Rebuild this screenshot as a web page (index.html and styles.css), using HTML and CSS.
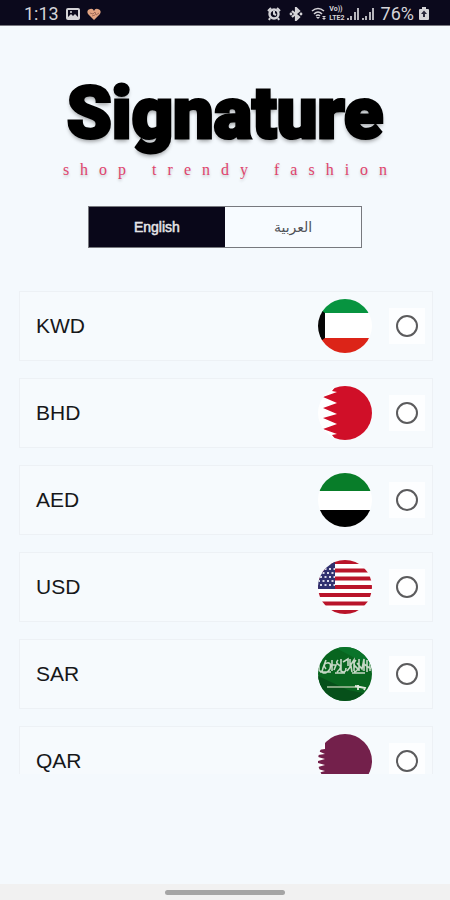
FILE: index.html
```html
<!DOCTYPE html>
<html lang="en">
<head>
<meta charset="utf-8">
<meta name="viewport" content="width=device-width, initial-scale=1">
<title>Signature</title>
<link rel="stylesheet" href="styles.css">
</head>
<body>
<div class="screen">
  <header class="status">
    <div class="status-group">
      <span>1:13</span>
      <svg class="picture" width="14" height="12" viewBox="0 0 14 12"><rect width="14" height="12" rx="2" fill="#d5d4d8"/><path d="M2 2h10v7l-3-3-2 2-2-2-3 3z" fill="#0b091c"/><circle cx="5" cy="4" r="1" fill="#d5d4d8"/></svg>
      <svg width="14" height="12" viewBox="0 0 14 12"><path d="M7 12L1 6Q-1 2 3 1Q6 0 7 3Q8 0 11 1Q15 2 13 6z" fill="#e2a482"/><path d="M3 5l3 1 2-2 1 3 3-2M5 8l3-1" stroke="#a06a58" fill="none"/></svg>
    </div>
    <div class="status-group right">
      <svg width="14" height="14" viewBox="0 0 14 14"><circle cx="7" cy="7" r="4.5" fill="none" stroke="#d5d4d8" stroke-width="2.400"/><path d="M1 4l3-3M10 1l3 3M3 11l-1 2M11 11l1 2M7 4v3l2 1" stroke="#d5d4d8" stroke-width="2" fill="none"/></svg>
      <svg class="bluetooth" width="14" height="14" viewBox="0 0 14 14"><path d="M3 4l7 6-3 3V1l3 3-7 6" stroke="#d5d4d8" stroke-width="2.200" fill="none"/><circle cx="2" cy="7" r="1.4" fill="#d5d4d8"/><circle cx="12" cy="7" r="1.4" fill="#d5d4d8"/></svg>
      <svg width="16" height="14" viewBox="0 0 16 14"><path d="M1 4Q7-1 13 4M3 7Q7 3 11 7M5 9Q7 7 9 9" stroke="#d5d4d8" stroke-width="1.6" fill="none"/><path d="M7 12l-2-2h4zM11 9l2 2 2-2M11 11l2 2 2-2" fill="#d5d4d8"/></svg>
      <span class="volte"><span>Vo))</span><span>LTE2</span></span>
      <svg width="13" height="14" viewBox="0 0 13 14"><path d="M1 13v-2M4 13V9M8 13V5M11 13V1" stroke="#d5d4d8" stroke-width="1.7"/></svg>
      <svg width="13" height="14" viewBox="0 0 13 14"><path d="M1 13v-2M4 13V9M8 13V5M11 13V1" stroke="#d5d4d8" stroke-width="1.7"/></svg>
      <span class="percent">76%</span>
      <svg width="10" height="13" viewBox="0 0 10 13"><path d="M3 0h4v2h2q1 0 1 1v9q0 1-1 1H1q-1 0-1-1V3q0-1 1-1h2z" fill="#d5d4d8"/><path d="M5 3.500L2 7h2v3h2V7h2z" fill="#28263a"/></svg>
    </div>
  </header>

  <main class="content">
    <h1 class="brand">Signature</h1>
    <p class="tagline">shop trendy fashion</p>
    <div class="languages">
      <button class="language selected" type="button">English</button>
      <button class="language" type="button" lang="ar">العربية</button>
    </div>

    <form class="currencies">
      <label class="currency"><span class="code">KWD</span>
        <svg class="flag" viewBox="0 0 54 54"><g clip-path="url(#disc)"><path d="M0 0h54v54H0z" fill="#fff"/><path d="M0 0h54v14H0z" fill="#079440"/><path d="M0 39h54v15H0z" fill="#dc2418"/><path d="M0 9l7 5v25l-7 5z" fill="#060606"/></g></svg>
        <span class="choice"><input type="radio" name="currency" value="KWD"></span></label>
      <label class="currency"><span class="code">BHD</span>
        <svg class="flag" viewBox="0 0 54 54"><g clip-path="url(#disc)"><path d="M0 0h54v54H0z" fill="#fff"/><path d="M54 0H18L14 5l5 1L5 11l14 6L5 22l14 6L5 32l14 6L5 43l14 5-5 1 4 5h36z" fill="#d00f28"/></g></svg>
        <span class="choice"><input type="radio" name="currency" value="BHD"></span></label>
      <label class="currency"><span class="code">AED</span>
        <svg class="flag" viewBox="0 0 54 54"><g clip-path="url(#disc)"><path d="M0 0h54v54H0z" fill="#fff"/><path d="M0 0h54v18H0z" fill="#087d29"/><path d="M0 37h54v17H0z"/></g></svg>
        <span class="choice"><input type="radio" name="currency" value="AED"></span></label>
      <label class="currency"><span class="code">USD</span>
        <svg class="flag" viewBox="0 0 54 54"><g clip-path="url(#disc)"><path d="M0 0h54v54H0z" fill="#fff"/><path d="M0 2h54M0 10.500h54M0 18.500h54M0 27h54M0 35h54M0 43.500h54M0 52h54" stroke="#b9142a" stroke-width="4.200"/><path d="M0 0h17v29H0z" fill="#30316f"/><path d="M2 9h15M0 13h17M2 17h15M0 21h17M2 25h15" stroke="#d8d9e8" stroke-width="1.800" stroke-dasharray="2 2.500"/></g></svg>
        <span class="choice"><input type="radio" name="currency" value="USD"></span></label>
      <label class="currency"><span class="code">SAR</span>
        <svg class="flag" viewBox="0 0 54 54"><g clip-path="url(#disc)"><path d="M0 0h54v54H0z" fill="#08651f"/><path d="M0 29l30 14 24 5v6H0z" fill="#06501a"/><path d="M16 0l38 20V8L36 0z" fill="#0a742a"/><g stroke="#c5d8c5" stroke-width="1.600" fill="none"><path d="M1 15v8q3 4 4-2l3-8M8 22q-4-5 1-6t3 6q-4 6-8 3M14 13v11M12 18h6l-2 5M20 13q-3 3 1 5t-2 7M23 12v12q5 3 5-3M25 15l5-3v7M29 24l4-5 1 6M32 12v7l4-6v11M38 13q-4 4 0 7t-2 5M41 12v12M39 16l5 6 2-10v12M49 13v12M46 17l7 5M52 15v9M2 25h11M17 26h10M34 26h13"/></g><path d="M9 40h33" stroke="#a9c1a1" stroke-width="1.500"/><path d="M37 39l10 2-1 2M40 38v5" stroke="#e0e9dd" stroke-width="1.800" fill="none"/></g></svg>
        <span class="choice"><input type="radio" name="currency" value="SAR"></span></label>
      <label class="currency"><span class="code">QAR</span>
        <svg class="flag" viewBox="0 0 54 54"><g clip-path="url(#disc)"><path d="M0 0h54v54H0z" fill="#fff"/><path d="M54 0H7v15l-7 1v1l7 3-7 1v2l7 2-7 2v2l7 2-7 2v2l7 2-7 2v2l7 2v10h47z" fill="#73204b"/></g></svg>
        <span class="choice"><input type="radio" name="currency" value="QAR"></span></label>
    </form>
  </main>
  <footer class="navigation"><span class="handle"></span></footer>
</div>
<svg class="defs" width="0" height="0"><defs><clipPath id="disc"><circle cx="27" cy="27" r="27"/></clipPath></defs></svg>
</body>
</html>
```
FILE: styles.css
```css
* { box-sizing: border-box; }
body { margin: 0; background: #f4f9fd; font-family: "Liberation Sans", sans-serif; color: #161719; }
.screen { height: 100vh; display: flex; flex-direction: column; }
.defs { position: absolute; }
.status { flex: none; height: 26px; padding: 2px 21px 0 24px; display: flex; align-items: center; justify-content: space-between; background: #0b091c; border-bottom: 1px solid #77777e; color: #d5d4d8; font: 18px/24px Roboto, sans-serif; }
.status-group { display: flex; align-items: center; gap: 7px; }
.right { gap: 2px; }
.bluetooth { margin: 0 6px; }
.volte { display: flex; flex-direction: column; font-size: 7px; font-weight: 700; line-height: 9px; }
.percent { margin: 0 3px 0 4px; }
.content { flex: 1; min-height: 0; display: flex; flex-direction: column; }
.brand { margin: 48px 0 0; text-align: center; font: 900 72px/80px Roboto, sans-serif; color: #000; text-shadow: 0 3px 4px #0006; -webkit-text-stroke: 3px #000; }
.tagline { margin: 4px 0 0; padding-left: 11px; text-align: center; white-space: nowrap; font: 16px/24px "Liberation Serif", serif; letter-spacing: 11px; color: #e0446d; text-shadow: 0 2px 3px #0003; }
.languages { width: 61%; height: 42px; margin: 24px auto 0; display: flex; border: 1px solid #77797e; }
.language { flex: 1; padding: 0; border: 0; background: #f7fbff; color: #505257; font: 14px "Liberation Sans", "DejaVu Sans", sans-serif; }
.selected { background: #090719; color: #e5e5e8; -webkit-text-stroke: 0.500px; }
.currencies { flex: 1; min-height: 0; overflow: hidden; margin: 43px 17px 110px 19px; display: flex; flex-direction: column; gap: 17px; }
.currency { flex: none; height: 70px; padding: 0 7px 0 16px; display: flex; align-items: center; border: 1px solid #edf1f5; background: #f6fafd; }
.code { flex: 1; font-size: 21px; line-height: 24px; }
.flag { width: 54px; height: 54px; margin-right: 17px; }
.choice { width: 36px; height: 36px; display: grid; place-items: center; background: #fdfeff; }
.choice input { appearance: none; width: 22px; height: 22px; margin: 0; border: 2px solid #5b5b5d; border-radius: 50%; background: #fff; }
.choice input:checked { background: radial-gradient(#090719 40%, #fff 45%); }
.navigation { flex: none; height: 16px; padding-top: 6px; background: #f1f1f1; display: flex; justify-content: center; }
.handle { width: 120px; height: 5px; border-radius: 3px; background: #a5a5a5; }
```
